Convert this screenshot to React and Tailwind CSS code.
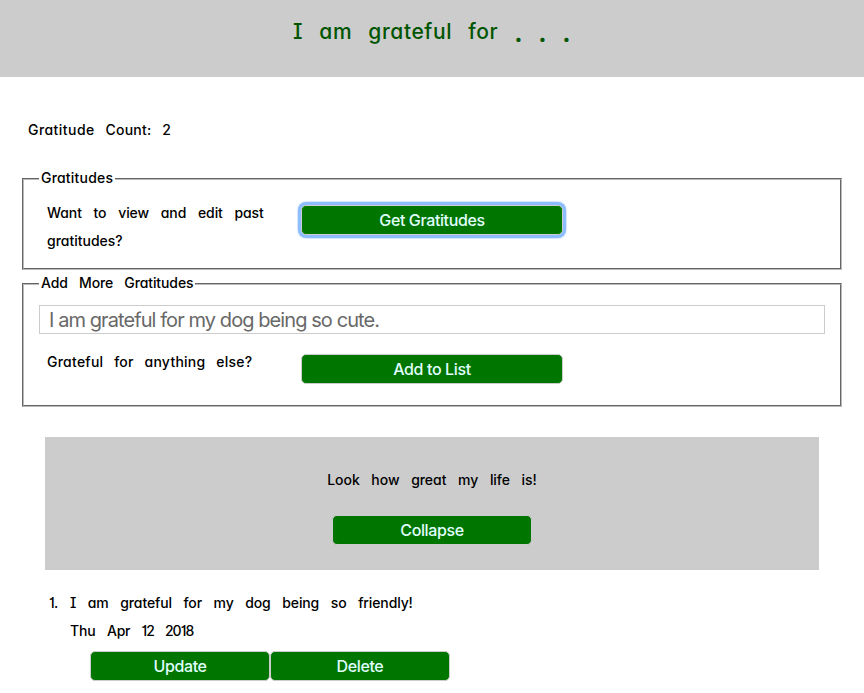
const hand = "font-['Inter','Noto_Sans',sans-serif] [font-feature-settings:'cv11','cv08','cv01','calt'_0] font-medium text-[14px] leading-[28px] text-black whitespace-nowrap";

function Button({ className, children }) {
  return (
    <button
      className={`block h-[30px] shrink-0 rounded-[5px] border border-[#ccc] bg-[#007500] text-center font-['Inter','Liberation_Sans',sans-serif] text-[16px] font-medium leading-[28px] tracking-[-0.38px] text-[#e0ffff] [font-feature-settings:normal] ${className}`}
    >
      {children}
    </button>
  );
}

function Fieldset({ legend, legendClass, className, children }) {
  return (
    <fieldset
      className={`mx-[22px] border-2 border-[#bababa] px-[15px] [border-style:groove] ${className}`}
    >
      <legend className={`h-[28px] px-[2px] leading-[26px] ${legendClass}`}>
        {legend}
      </legend>
      {children}
    </fieldset>
  );
}

export default function App() {
  return (
    <div className={`h-[693px] w-[864px] overflow-hidden bg-white ${hand}`}>
      <header className="h-[77px] bg-[#ccc] pt-[18px] text-center">
        <h1 className="text-[21px] font-medium leading-[28px] tracking-[0.6px] text-[#005500] [word-spacing:10px]">
          I am grateful for{" "}
          <span className="relative top-[3px] font-black [word-spacing:12px]">. . .</span>
        </h1>
      </header>

      <p className="ml-[28px] mt-[39px] h-[49px] tracking-[0.2px] [word-spacing:7px]">
        <span className="tracking-[0.45px]">Gratitude</span> Count: 2
      </p>

      <Fieldset
        legend="Gratitudes"
        legendClass="w-[76px] tracking-[0.2px]"
        className="h-[105px]"
      >
        <div className="flex pt-[6px]">
          <p className="ml-[8px] w-[254px] tracking-[-0.07px] [word-spacing:8px]">
            Want to view and edit past
            <br />
            <span className="tracking-[0px]">gratitudes?</span>
          </p>
          <Button className="mt-[6px] w-[262px] shadow-[0_0_0_3px_#8dbdfc,0_0_1px_4px_#d5e7fd]">
            Get Gratitudes
          </Button>
        </div>
      </Fieldset>

      <Fieldset
        legend="Add More Gratitudes"
        legendClass="w-[156px] tracking-[-0.1px] [word-spacing:7.5px]"
        className="h-[137px]"
      >
        <input
          type="text"
          placeholder="I am grateful for my dog being so cute."
          className="mt-[7px] block h-[29px] w-[786px] border border-[#ccc] pl-[9px] font-['Inter','Liberation_Sans',sans-serif] text-[20px] font-normal tracking-[-0.92px] [font-feature-settings:normal] placeholder:text-[#686868]"
        />
        <div className="flex pt-[14px]">
          <p className="ml-[8px] w-[254px] tracking-[0.25px] [word-spacing:6.8px]">
            Grateful for anything else?
          </p>
          <Button className="mt-[6px] w-[262px]">Add to List</Button>
        </div>
      </Fieldset>

      <section className="mx-[45px] mt-[30px] flex h-[133px] flex-col items-center bg-[#ccc] pt-[29px]">
        <p className="tracking-[-0.05px] [word-spacing:8px]">
          Look how great my life is!
        </p>
        <Button className="mt-[21px] w-[200px]">Collapse</Button>
      </section>

      <ol className="mt-[19px] pl-[49px]">
        <li className="flex">
          <span className="w-[21px]">1.</span>
          <div>
            <p className="tracking-[-0.12px] [word-spacing:8px]">
              I am grateful for my dog being so friendly!
            </p>
            <p className="tracking-[-0.5px] [word-spacing:8px]">
              <span className="tracking-[-0.2px]">Thu Apr</span>{" "}
              <span className="tracking-[-0.9px]">12 2018</span>
            </p>
            <div className="ml-[20px] mt-[6px] flex">
              <Button className="w-[180px]">Update</Button>
              <Button className="w-[180px]">Delete</Button>
            </div>
          </div>
        </li>
      </ol>
    </div>
  );
}
